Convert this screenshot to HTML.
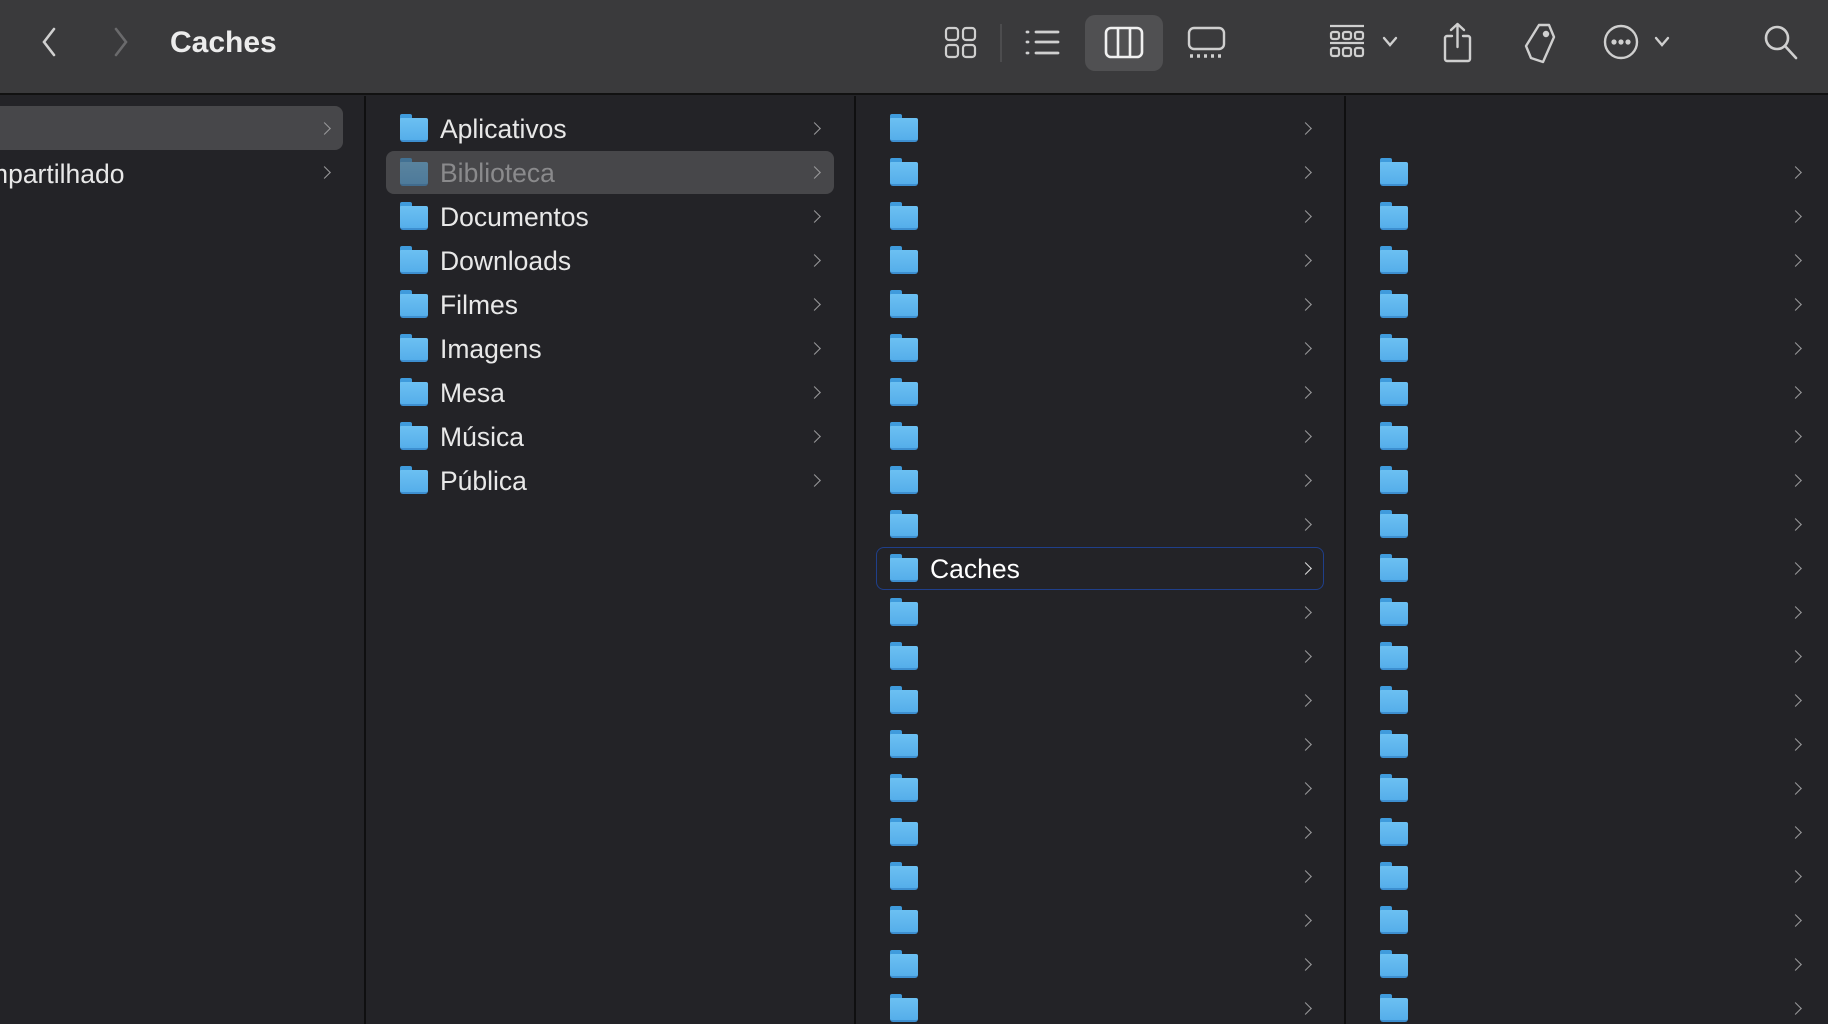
<!DOCTYPE html>
<html><head><meta charset="utf-8"><style>
*{margin:0;padding:0;box-sizing:border-box}
body{width:1828px;height:1024px;overflow:hidden;background:#232327;font-family:"Liberation Sans",sans-serif;position:relative;color:#e6e6e6}
.tb{position:absolute;left:0;top:0;width:1828px;height:95px;background:#3a3a3c;border-bottom:2px solid #111}
.title{position:absolute;left:170px;top:26px;font-size:30px;font-weight:bold;color:#ececec}
.ic{position:absolute}
.div{position:absolute;top:96px;width:2px;height:928px;background:#0f0f10}
.f{position:absolute;width:28px;height:26px}
.f:before{content:"";position:absolute;left:0;top:0;width:12px;height:6px;background:#3f9bdc;border-radius:2px 2px 0 0}
.f:after{content:"";position:absolute;left:0;top:4px;width:28px;height:22px;background:linear-gradient(#6cc0f2,#55aeea);border-radius:1px 2px 3px 3px;border-bottom:2px solid #3d8fd0}
.t{position:absolute;font-size:26.5px;color:#e8e8e8;top:9px}
.ch{position:absolute;width:9px;height:9px;border-right:1.8px solid #9a9a9c;border-top:1.8px solid #9a9a9c;transform:rotate(45deg)}
.sel{position:absolute;background:#47474a;border-radius:8px}
</style></head><body>
<div class="tb">
<svg class="ic" style="left:36px;top:24px" width="26" height="36"><path d="M18 5 L8 18 L18 31" stroke="#d0d0d0" stroke-width="2.6" fill="none" stroke-linecap="round"/></svg>
<svg class="ic" style="left:108px;top:24px" width="26" height="36"><path d="M8 5 L18 18 L8 31" stroke="#6a6a6c" stroke-width="2.6" fill="none" stroke-linecap="round"/></svg>
<div class="title">Caches</div>
<svg class="ic" style="left:944px;top:26px" width="34" height="34" fill="none" stroke="#cfcfcf" stroke-width="2.2"><rect x="2" y="2" width="12" height="12" rx="3"/><rect x="19" y="2" width="12" height="12" rx="3"/><rect x="2" y="19" width="12" height="12" rx="3"/><rect x="19" y="19" width="12" height="12" rx="3"/></svg>
<div style="position:absolute;left:1000px;top:24px;width:2px;height:38px;background:#4c4c4e"></div>
<svg class="ic" style="left:1024px;top:28px" width="38" height="30" stroke="#cfcfcf" stroke-width="2.8" stroke-linecap="round"><path d="M3 4h1M3 14h1M3 25h1M12 4h22M12 14h22M12 25h22"/></svg>
<div style="position:absolute;left:1085px;top:15px;width:78px;height:56px;background:#505052;border-radius:10px"></div>
<svg class="ic" style="left:1104px;top:26px" width="40" height="34" fill="none" stroke="#f0f0f0" stroke-width="2.6"><rect x="2" y="2" width="36" height="29" rx="5"/><path d="M14 2v29M26 2v29"/></svg>
<svg class="ic" style="left:1187px;top:26px" width="40" height="34" fill="none" stroke="#cfcfcf" stroke-width="2.4"><rect x="2" y="2" width="35" height="21" rx="5"/><path d="M3 30h3M10 30h3M17 30h3M24 30h3M31 30h3" stroke-width="3.5"/></svg>
<svg class="ic" style="left:1328px;top:23px" width="40" height="40" fill="none" stroke="#cfcfcf" stroke-width="2.2"><path d="M2 3h34M2 20h34"/><rect x="3" y="9" width="8" height="7" rx="2"/><rect x="15" y="9" width="8" height="7" rx="2"/><rect x="27" y="9" width="8" height="7" rx="2"/><rect x="3" y="25" width="8" height="8" rx="2"/><rect x="15" y="25" width="8" height="8" rx="2"/><rect x="27" y="25" width="8" height="8" rx="2"/></svg>
<svg class="ic" style="left:1382px;top:36px" width="16" height="12" fill="none" stroke="#cfcfcf" stroke-width="2.4" stroke-linecap="round"><path d="M2 2l6 7 6-7"/></svg>
<svg class="ic" style="left:1442px;top:22px" width="32" height="42" fill="none" stroke="#cfcfcf" stroke-width="2.4" stroke-linecap="round" stroke-linejoin="round"><path d="M10 14H5a2 2 0 0 0-2 2v21a2 2 0 0 0 2 2h21a2 2 0 0 0 2-2V16a2 2 0 0 0-2-2h-5M15.5 25V2M9 8l6.5-6 6.5 6"/></svg>
<svg class="ic" style="left:1519px;top:22px" width="40" height="42" fill="none" stroke="#cfcfcf" stroke-width="2.4" stroke-linejoin="round"><path d="M20 3h10l5 12L24 40 12 36 7 24Z"/><circle cx="27" cy="12" r="2" fill="#cfcfcf"/></svg>
<svg class="ic" style="left:1603px;top:24px" width="36" height="36" fill="none" stroke="#cfcfcf" stroke-width="2.4"><circle cx="18" cy="18" r="16"/><circle cx="11" cy="18" r="1.4" fill="#cfcfcf"/><circle cx="18" cy="18" r="1.4" fill="#cfcfcf"/><circle cx="25" cy="18" r="1.4" fill="#cfcfcf"/></svg>
<svg class="ic" style="left:1654px;top:36px" width="16" height="12" fill="none" stroke="#cfcfcf" stroke-width="2.4" stroke-linecap="round"><path d="M2 2l6 7 6-7"/></svg>
<svg class="ic" style="left:1763px;top:24px" width="36" height="38" fill="none" stroke="#cfcfcf" stroke-width="2.6" stroke-linecap="round"><circle cx="14" cy="14" r="11"/><path d="M22 22l11 12"/></svg>
</div>
<div class="div" style="left:364px"></div>
<div class="div" style="left:854px"></div>
<div class="div" style="left:1344px"></div>

<div class="sel" style="left:-10px;top:106px;width:353px;height:44px"></div>
<div class="ch" style="left:320px;top:124px"></div>
<div class="t" style="left:-14px;top:159px">mpartilhado</div>
<div class="ch" style="left:320px;top:168px"></div>

<div class="sel" style="left:386px;top:151px;width:448px;height:43px"></div>

<div style="position:absolute;left:876px;top:547px;width:448px;height:43px;border:1px solid #1f3f8a;border-radius:8px"></div>

<div class="f" style="left:400px;top:114px"></div><div class="t" style="left:440px;top:114px">Aplicativos</div><div class="ch" style="left:810px;top:124px"></div>
<div class="f" style="left:400px;top:158px;opacity:.5"></div><div class="t" style="left:440px;top:158px;color:#8a8a8c">Biblioteca</div><div class="ch" style="left:810px;top:168px"></div>
<div class="f" style="left:400px;top:202px"></div><div class="t" style="left:440px;top:202px">Documentos</div><div class="ch" style="left:810px;top:212px"></div>
<div class="f" style="left:400px;top:246px"></div><div class="t" style="left:440px;top:246px">Downloads</div><div class="ch" style="left:810px;top:256px"></div>
<div class="f" style="left:400px;top:290px"></div><div class="t" style="left:440px;top:290px">Filmes</div><div class="ch" style="left:810px;top:300px"></div>
<div class="f" style="left:400px;top:334px"></div><div class="t" style="left:440px;top:334px">Imagens</div><div class="ch" style="left:810px;top:344px"></div>
<div class="f" style="left:400px;top:378px"></div><div class="t" style="left:440px;top:378px">Mesa</div><div class="ch" style="left:810px;top:388px"></div>
<div class="f" style="left:400px;top:422px"></div><div class="t" style="left:440px;top:422px">Música</div><div class="ch" style="left:810px;top:432px"></div>
<div class="f" style="left:400px;top:466px"></div><div class="t" style="left:440px;top:466px">Pública</div><div class="ch" style="left:810px;top:476px"></div>
<div class="t" style="left:930px;top:554px;color:#fff">Caches</div>

<div class="f" style="left:890px;top:114px"></div><div class="ch" style="left:1301px;top:124px"></div>
<div class="f" style="left:890px;top:158px"></div><div class="ch" style="left:1301px;top:168px"></div>
<div class="f" style="left:890px;top:202px"></div><div class="ch" style="left:1301px;top:212px"></div>
<div class="f" style="left:890px;top:246px"></div><div class="ch" style="left:1301px;top:256px"></div>
<div class="f" style="left:890px;top:290px"></div><div class="ch" style="left:1301px;top:300px"></div>
<div class="f" style="left:890px;top:334px"></div><div class="ch" style="left:1301px;top:344px"></div>
<div class="f" style="left:890px;top:378px"></div><div class="ch" style="left:1301px;top:388px"></div>
<div class="f" style="left:890px;top:422px"></div><div class="ch" style="left:1301px;top:432px"></div>
<div class="f" style="left:890px;top:466px"></div><div class="ch" style="left:1301px;top:476px"></div>
<div class="f" style="left:890px;top:510px"></div><div class="ch" style="left:1301px;top:520px"></div>
<div class="f" style="left:890px;top:554px"></div><div class="ch" style="left:1301px;top:564px;border-color:#ddd"></div>
<div class="f" style="left:890px;top:598px"></div><div class="ch" style="left:1301px;top:608px"></div>
<div class="f" style="left:890px;top:642px"></div><div class="ch" style="left:1301px;top:652px"></div>
<div class="f" style="left:890px;top:686px"></div><div class="ch" style="left:1301px;top:696px"></div>
<div class="f" style="left:890px;top:730px"></div><div class="ch" style="left:1301px;top:740px"></div>
<div class="f" style="left:890px;top:774px"></div><div class="ch" style="left:1301px;top:784px"></div>
<div class="f" style="left:890px;top:818px"></div><div class="ch" style="left:1301px;top:828px"></div>
<div class="f" style="left:890px;top:862px"></div><div class="ch" style="left:1301px;top:872px"></div>
<div class="f" style="left:890px;top:906px"></div><div class="ch" style="left:1301px;top:916px"></div>
<div class="f" style="left:890px;top:950px"></div><div class="ch" style="left:1301px;top:960px"></div>
<div class="f" style="left:890px;top:994px"></div><div class="ch" style="left:1301px;top:1004px"></div>

<div class="f" style="left:1380px;top:158px"></div><div class="ch" style="left:1791px;top:168px"></div>
<div class="f" style="left:1380px;top:202px"></div><div class="ch" style="left:1791px;top:212px"></div>
<div class="f" style="left:1380px;top:246px"></div><div class="ch" style="left:1791px;top:256px"></div>
<div class="f" style="left:1380px;top:290px"></div><div class="ch" style="left:1791px;top:300px"></div>
<div class="f" style="left:1380px;top:334px"></div><div class="ch" style="left:1791px;top:344px"></div>
<div class="f" style="left:1380px;top:378px"></div><div class="ch" style="left:1791px;top:388px"></div>
<div class="f" style="left:1380px;top:422px"></div><div class="ch" style="left:1791px;top:432px"></div>
<div class="f" style="left:1380px;top:466px"></div><div class="ch" style="left:1791px;top:476px"></div>
<div class="f" style="left:1380px;top:510px"></div><div class="ch" style="left:1791px;top:520px"></div>
<div class="f" style="left:1380px;top:554px"></div><div class="ch" style="left:1791px;top:564px"></div>
<div class="f" style="left:1380px;top:598px"></div><div class="ch" style="left:1791px;top:608px"></div>
<div class="f" style="left:1380px;top:642px"></div><div class="ch" style="left:1791px;top:652px"></div>
<div class="f" style="left:1380px;top:686px"></div><div class="ch" style="left:1791px;top:696px"></div>
<div class="f" style="left:1380px;top:730px"></div><div class="ch" style="left:1791px;top:740px"></div>
<div class="f" style="left:1380px;top:774px"></div><div class="ch" style="left:1791px;top:784px"></div>
<div class="f" style="left:1380px;top:818px"></div><div class="ch" style="left:1791px;top:828px"></div>
<div class="f" style="left:1380px;top:862px"></div><div class="ch" style="left:1791px;top:872px"></div>
<div class="f" style="left:1380px;top:906px"></div><div class="ch" style="left:1791px;top:916px"></div>
<div class="f" style="left:1380px;top:950px"></div><div class="ch" style="left:1791px;top:960px"></div>
<div class="f" style="left:1380px;top:994px"></div><div class="ch" style="left:1791px;top:1004px"></div>
</body></html>
